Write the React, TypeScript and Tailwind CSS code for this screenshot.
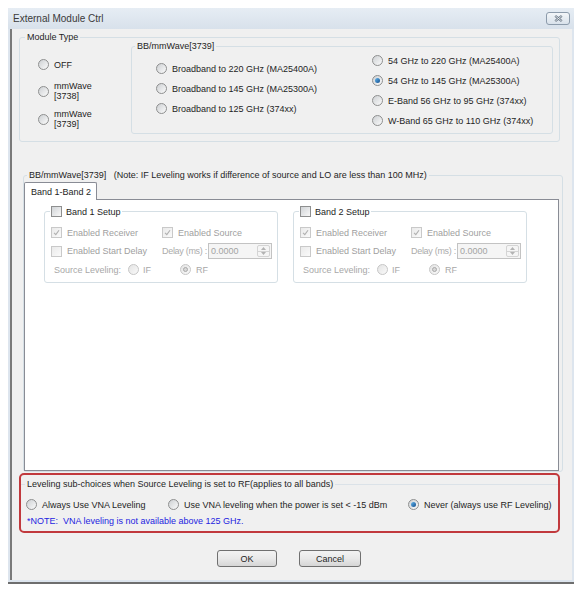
import React from 'react';

function Radio({ checked = false, disabled = false }: { checked?: boolean; disabled?: boolean }) {
  return (
    <span
      className={
        disabled
          ? 'shrink-0 w-[11px] h-[11px] rounded-full border border-[#c6c6c6] bg-linear-to-br from-[#e4e4e4] to-[#f9f9f9] flex items-center justify-center'
          : 'shrink-0 w-[11px] h-[11px] rounded-full border border-[#8e8f8f] bg-linear-to-br from-[#cdd0d3] to-[#fbfbfb] flex items-center justify-center'
      }
    >
      {checked &&
        (disabled ? (
          <span className="w-[5px] h-[5px] rounded-full border border-[#a9a9a9] bg-[#d8d8d8]" />
        ) : (
          <span className="w-[5px] h-[5px] rounded-full bg-linear-to-br from-[#62b6ee] to-[#16508e]" />
        ))}
    </span>
  );
}

function Check({ checked = false, disabled = false }: { checked?: boolean; disabled?: boolean }) {
  return (
    <span
      className={
        disabled
          ? 'shrink-0 w-[11px] h-[11px] border border-[#c9c9c9] bg-linear-to-br from-[#eaeaea] to-[#fafafa] flex items-center justify-center'
          : 'shrink-0 w-[11px] h-[11px] border border-[#8e8f8f] bg-linear-to-br from-[#d1d4d7] to-[#f8f8f8] flex items-center justify-center'
      }
    >
      {checked && (
        <svg width="7" height="7" viewBox="0 0 7 7">
          <path d="M1 3.8 L2.8 5.6 L6 1.2" fill="none" stroke={disabled ? '#b0b0b0' : '#333'} strokeWidth="1.1" />
        </svg>
      )}
    </span>
  );
}

function RadioItem({ label, checked = false }: { label: React.ReactNode; checked?: boolean }) {
  return (
    <div className="flex items-center gap-[5px] h-[11px] whitespace-nowrap">
      <Radio checked={checked} />
      <span>{label}</span>
    </div>
  );
}

function Spin() {
  return (
    <div className="flex w-[64px] h-[16px] border border-[#c3c3c3] bg-[#f5f5f5] ml-[1px]">
      <span className="flex-1 pl-[2px] leading-[14px] text-[#a3a3a3]">0.0000</span>
      <div className="w-[13px] flex flex-col border border-[#d4d4d4] rounded-[2px] m-[1px]">
        <span className="flex-1 flex items-center justify-center border-b border-[#d4d4d4]">
          <svg width="5" height="3" viewBox="0 0 5 3">
            <path d="M0 3 L2.5 0 L5 3Z" fill="#b3b3b3" />
          </svg>
        </span>
        <span className="flex-1 flex items-center justify-center">
          <svg width="5" height="3" viewBox="0 0 5 3">
            <path d="M0 0 L2.5 3 L5 0Z" fill="#b3b3b3" />
          </svg>
        </span>
      </div>
    </div>
  );
}

function BandBox({ n }: { n: number }) {
  return (
    <fieldset className="w-[234px] h-[77px] shrink-0 border border-[#d5dfe5] rounded-[3px]">
      <legend className="ml-[5px] px-[1px]">
        <span className="flex items-center gap-[4px] h-[11px] text-[#1e1e1e]">
          <Check />
          <span>Band {n} Setup</span>
        </span>
      </legend>
      <div className="pl-[6px]">
        <div className="mt-[10px] flex items-center h-[11px] text-[#a0a0a0]">
          <div className="w-[111px] flex items-center gap-[5px]">
            <Check checked disabled />
            <span>Enabled Receiver</span>
          </div>
          <div className="flex items-center gap-[5px]">
            <Check checked disabled />
            <span>Enabled Source</span>
          </div>
        </div>
        <div className="mt-[5px] flex items-center h-[16px] text-[#a0a0a0]">
          <div className="w-[111px] flex items-center gap-[5px]">
            <Check disabled />
            <span>Enabled Start Delay</span>
          </div>
          <span className="whitespace-pre tracking-[-0.3px] text-[#ababab]">Delay (ms) :</span>
          <Spin />
        </div>
        <div className="mt-[5px] flex items-center h-[11px] text-[#a8a8a8]">
          <span className="ml-[3px] w-[74px]">Source Leveling:</span>
          <div className="w-[52px] flex items-center gap-[4px]">
            <Radio disabled />
            <span>IF</span>
          </div>
          <div className="flex items-center gap-[5px]">
            <Radio checked disabled />
            <span>RF</span>
          </div>
        </div>
      </div>
    </fieldset>
  );
}

function Button({ label, w }: { label: string; w: string }) {
  return (
    <div
      className={`${w} h-[17px] rounded-[3px] border border-[#707070] bg-linear-to-b from-[#f3f3f3] via-[#e9e9e9] to-[#d6d6d6] flex items-center justify-center text-[#1e1e1e]`}
    >
      {label}
    </div>
  );
}

export default function App() {
  return (
    <div className="w-[577px] h-[592px] bg-white pt-[8px] pl-[8px] font-['Liberation_Sans',Arial,sans-serif] text-[9px] leading-[10px] text-[#1e1e1e]">
      <div className="w-[566px] h-[576px] flex flex-col bg-[#dde5ee] border-b-2 border-[#6e6e6e]">
        {/* Title bar */}
        <div className="h-[21px] shrink-0 flex items-center justify-between pl-[5px] pr-[4px] bg-linear-to-b from-[#e6edf4] to-[#d8e1eb]">
          <span className="text-[10px] text-[#3a3a3a]">External Module Ctrl</span>
          <div className="w-[24px] h-[13px] rounded-[3px] border border-[#8c9bab] bg-linear-to-b from-[#f3f6f9] to-[#d9e2eb] flex items-center justify-center">
            <svg width="9" height="7" viewBox="0 0 9 7">
              <path d="M1.2 0.8 L7.8 6.2 M7.8 0.8 L1.2 6.2" stroke="#6a7887" strokeWidth="2.2" />
              <path d="M1.2 0.8 L7.8 6.2 M7.8 0.8 L1.2 6.2" stroke="#f4f6f8" strokeWidth="0.8" />
            </svg>
          </div>
        </div>

        {/* Body */}
        <div className="flex-1 pl-[2px] pr-[2px]">
          <div className="w-[562px] h-[551px] bg-[#f0f0f0] border-l-2 border-[#7a7a7a] flex flex-col">
            {/* Module Type */}
            <fieldset className="ml-[7px] mt-[3px] w-[541px] h-[110px] border border-[#d5dfe5] rounded-[3px]">
              <legend className="ml-[5px] px-[2px]">Module Type</legend>
              <div className="flex">
                <div className="w-[111px] pl-[18px] flex flex-col">
                  <div className="mt-[17px]">
                    <RadioItem label="OFF" />
                  </div>
                  <div className="mt-[11px] flex items-center gap-[5px]">
                    <Radio />
                    <span>
                      mmWave
                      <br />
                      [3738]
                    </span>
                  </div>
                  <div className="mt-[8px] flex items-center gap-[5px]">
                    <Radio />
                    <span>
                      mmWave
                      <br />
                      [3739]
                    </span>
                  </div>
                </div>
                <fieldset className="-mt-px w-[422px] h-[93px] border border-[#d5dfe5] rounded-[3px]">
                  <legend className="ml-[3px] px-[2px]">BB/mmWave[3739]</legend>
                  <div className="flex">
                    <div className="w-[240px] pl-[24px] pt-[12px] flex flex-col gap-[9px]">
                      <RadioItem label="Broadband to 220 GHz (MA25400A)" />
                      <RadioItem label="Broadband to 145 GHz (MA25300A)" />
                      <RadioItem label="Broadband to 125 GHz (374xx)" />
                    </div>
                    <div className="pt-[4px] flex flex-col gap-[9px]">
                      <RadioItem label="54 GHz to 220 GHz (MA25400A)" />
                      <RadioItem label="54 GHz to 145 GHz (MA25300A)" checked />
                      <RadioItem label="E-Band 56 GHz to 95 GHz (374xx)" />
                      <RadioItem label="W-Band 65 GHz to 110 GHz (374xx)" />
                    </div>
                  </div>
                </fieldset>
              </div>
            </fieldset>

            {/* BB/mmWave section */}
            <fieldset className="ml-[11px] mt-[28px] w-[540px] border border-[#d5dfe5] rounded-[3px]">
              <legend className="ml-[3px] px-[2px] whitespace-pre">
                {'BB/mmWave[3739]   (Note: IF Leveling works if difference of source and LO are less than 100 MHz)'}
              </legend>
              <div className="mt-[2px] relative z-10 w-[73px] h-[18px] bg-white border border-b-0 border-[#898c95] rounded-t-[2px] pl-[6px] flex items-center">
                Band 1-Band 2
              </div>
              <div className="-mt-px w-[535px] h-[272px] bg-white border border-[#898c95] flex items-start gap-[15px] pl-[19px] pt-[6px]">
                <BandBox n={1} />
                <BandBox n={2} />
              </div>
            </fieldset>

            {/* Leveling sub-choices (highlighted) */}
            <div className="ml-[7px] mt-[1px] w-[541px] h-[60px] border-2 border-[#c1393d] rounded-[5px]">
              <fieldset className="mt-[4px] border-t border-[#dbe2e8]">
                <legend className="ml-[4px] px-[2px]">
                  Leveling sub-choices when Source Leveling is set to RF(applies to all bands)
                </legend>
                <div className="mt-[10px] flex pl-[5px]">
                  <div className="w-[142px]">
                    <RadioItem label="Always Use VNA Leveling" />
                  </div>
                  <div className="w-[240px]">
                    <RadioItem label="Use VNA leveling when the power is set < -15 dBm" />
                  </div>
                  <RadioItem label="Never (always use RF Leveling)" checked />
                </div>
                <div className="mt-[6px] pl-[6px] whitespace-pre text-[#2424e0]">
                  {'*NOTE:  VNA leveling is not available above 125 GHz.'}
                </div>
              </fieldset>
            </div>

            {/* Buttons */}
            <div className="mt-[17px] flex gap-[22px] pl-[205px]">
              <Button label="OK" w="w-[60px]" />
              <Button label="Cancel" w="w-[62px]" />
            </div>
          </div>
        </div>
      </div>
    </div>
  );
}
